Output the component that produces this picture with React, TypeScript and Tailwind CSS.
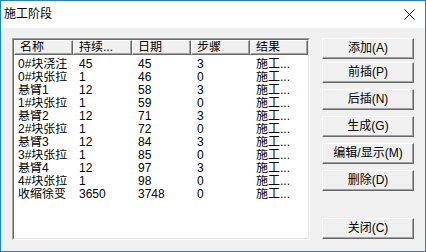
import React from "react";

const rows: [string, string, string, string, string][] = [
  ["0#块浇注", "45", "45", "3", "施工..."],
  ["0#块张拉", "1", "46", "0", "施工..."],
  ["悬臂1", "12", "58", "3", "施工..."],
  ["1#块张拉", "1", "59", "0", "施工..."],
  ["悬臂2", "12", "71", "3", "施工..."],
  ["2#块张拉", "1", "72", "0", "施工..."],
  ["悬臂3", "12", "84", "3", "施工..."],
  ["3#块张拉", "1", "85", "0", "施工..."],
  ["悬臂4", "12", "97", "3", "施工..."],
  ["4#块张拉", "1", "98", "0", "施工..."],
  ["收缩徐变", "3650", "3748", "0", "施工..."],
];

const headers = ["名称", "持续...", "日期", "步骤", "结果"];
const widths = ["w-[59px]", "w-[59px]", "w-[59px]", "w-[59px]", "w-[58px]"];

function Btn({ label, className }: { label: string; className?: string }) {
  return (
    <div
      className={
        "w-[92px] h-[21px] flex items-center justify-center bg-[#f0f0f0] border border-t-white border-l-white border-b-[#696969] border-r-[#696969] shadow-[inset_-1px_-1px_0_#a0a0a0] text-[12px] leading-[13px] text-black " +
        (className ?? "")
      }
    >
      {label}
    </div>
  );
}

export default function App() {
  return (
    <div
      className="w-[426px] h-[252px] border border-[#1883d7] flex flex-col bg-[#f0f0f0] overflow-hidden"
      style={{ fontFamily: '"Liberation Sans", "Noto Sans CJK SC", sans-serif' }}
    >
      <div className="h-[27px] bg-white flex items-center justify-between pl-[3px] pr-[10px] shrink-0">
        <span className="text-[12px] leading-[13px] text-black">施工阶段</span>
        <svg width="11" height="11" viewBox="0 0 11 11">
          <path d="M0.5 0.5 L10.5 10.5 M10.5 0.5 L0.5 10.5" stroke="#000" strokeWidth="1" />
        </svg>
      </div>
      <div className="flex-1 flex pl-[11px] pt-[10px]">
        <div className="w-[298px] h-[202px] border border-t-[#a0a0a0] border-l-[#a0a0a0] border-b-white border-r-white">
          <div className="w-full h-full border border-t-[#696969] border-l-[#696969] border-b-[#e3e3e3] border-r-[#e3e3e3] bg-white overflow-hidden">
            <div className="flex h-[15px]">
              {headers.map((h, i) => (
                <div
                  key={h}
                  className={
                    widths[i] +
                    " shrink-0 h-[15px] bg-[#f0f0f0] border border-t-white border-l-white border-b-[#696969] border-r-[#696969] shadow-[inset_-1px_-1px_0_#a0a0a0] pl-[5px] text-[12px] leading-[12px] text-black whitespace-nowrap overflow-hidden"
                  }
                >
                  {h}
                </div>
              ))}
            </div>
            <div className="pt-[3px]">
              {rows.map((r, ri) => (
                <div key={ri} className="flex h-[13px] text-[12px] leading-[13px] text-black">
                  {r.map((c, ci) => (
                    <div
                      key={ci}
                      className={
                        widths[ci] +
                        " shrink-0 whitespace-nowrap overflow-hidden " +
                        (ci === 0 ? "pl-[4px]" : "pl-[6px]")
                      }
                    >
                      {c}
                    </div>
                  ))}
                </div>
              ))}
            </div>
          </div>
        </div>
        <div className="ml-[12px] flex flex-col">
          <Btn label="添加(A)" />
          <Btn label="前插(P)" className="mt-[3px]" />
          <Btn label="后插(N)" className="mt-[6px]" />
          <Btn label="生成(G)" className="mt-[6px]" />
          <Btn label="编辑/显示(M)" className="mt-[6px]" />
          <Btn label="删除(D)" className="mt-[6px]" />
          <Btn label="关闭(C)" className="mt-[27px]" />
        </div>
      </div>
    </div>
  );
}
